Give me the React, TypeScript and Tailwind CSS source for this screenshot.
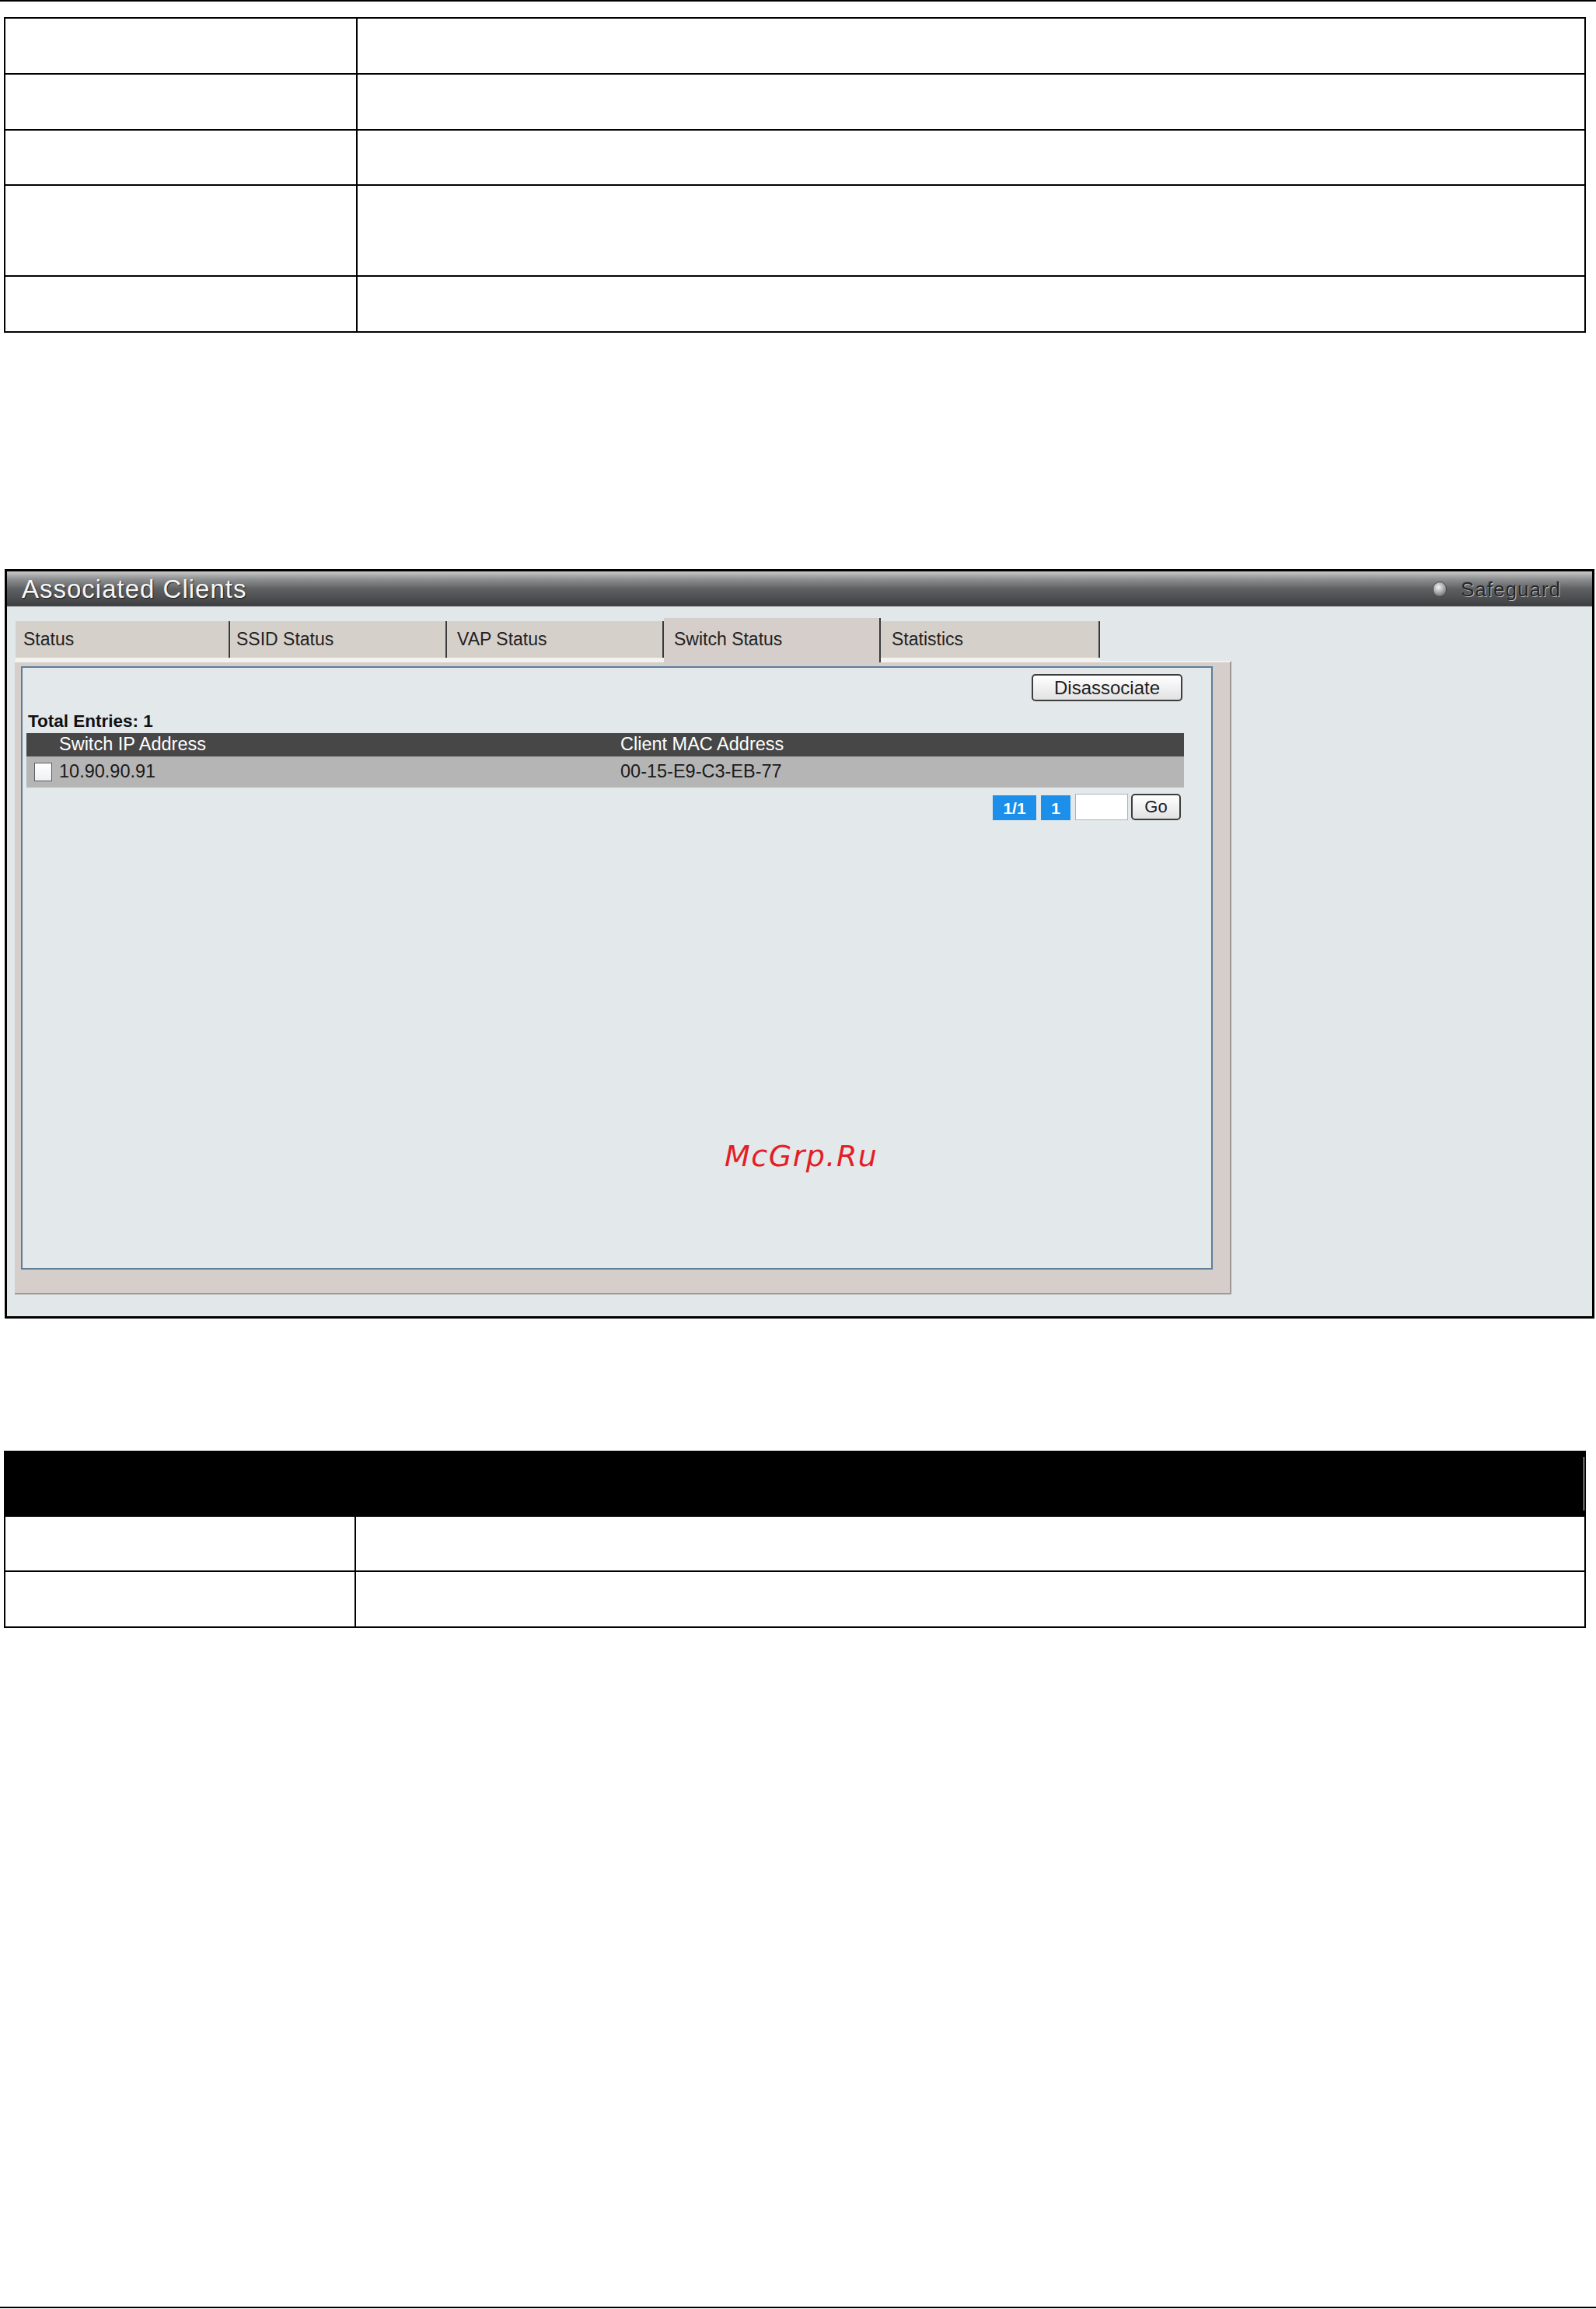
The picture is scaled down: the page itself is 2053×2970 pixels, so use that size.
import React from "react";

function InactiveTab({ w, label, pl }: { w: string; label: string; pl: string }) {
  return (
    <div className={`${w} mt-[4px] h-[51px] flex flex-col border-b-[4px] border-[#f4f2ee]`}>
      <div
        className={`flex-1 flex items-center ${pl} bg-[#d6d0cb] border-r-2 border-[#3a3a3a] text-[23px] text-[#222] font-['Liberation_Sans',Arial,sans-serif]`}
      >
        {label}
      </div>
    </div>
  );
}

export default function App() {
  const topRows = ["h-[72px]", "h-[72px]", "h-[71px]", "h-[117px]", "h-[72px]"];
  const bottomRows = ["h-[71px]", "h-[72px]"];

  return (
    <div className="w-[2053px] h-[2970px] bg-white flex flex-col font-['Liberation_Sans',Arial,sans-serif]">
      {/* top rule */}
      <div className="h-[2px] w-full bg-black shrink-0" />

      {/* top document table */}
      <div className="ml-[5px] mt-[20px] w-[2035px] border-x-2 border-t-2 border-black shrink-0">
        {topRows.map((h, i) => (
          <div key={i} className={`${h} flex border-b-2 border-black`}>
            <div className="w-[453px] border-r-2 border-black" />
            <div className="flex-1" />
          </div>
        ))}
      </div>

      {/* screenshot panel */}
      <div className="ml-[6px] mt-[304px] w-[2045px] h-[964px] border-[3px] border-black flex flex-col shrink-0">
        {/* title bar */}
        <div className="h-[45px] shrink-0 flex items-center justify-between pl-[19px] pr-[40px] bg-[linear-gradient(to_bottom,#c6c8c9_0%,#8e9091_22%,#5f6061_50%,#3d3e3f_100%)]">
          <span className="text-[33px] leading-none tracking-[1px] text-[#f7f7f7] [text-shadow:1px_1px_1px_#1e1e1e] font-['Liberation_Sans',Arial,sans-serif]">
            Associated Clients
          </span>
          <div className="flex items-center gap-[18px]">
            <span className="w-[18px] h-[20px] rounded-full bg-[radial-gradient(circle_at_40%_35%,#f4f4f4,#a4a4a4_50%,#4a4a4a)] border border-[#4a4a4a]" />
            <span className="text-[26px] leading-none tracking-[1px] text-[#262626] [text-shadow:1px_1px_0_#bdbdbd,-1px_-1px_0_#6e6e6e] font-['Liberation_Sans',Arial,sans-serif]">
              Safeguard
            </span>
          </div>
        </div>

        {/* body */}
        <div className="flex-1 bg-[#e2e7ea] flex flex-col">
          {/* tabs */}
          <div className="h-[70px] shrink-0 flex items-start pl-[11px] pt-[15px]">
            <InactiveTab w="w-[276px]" label="Status" pl="pl-[10px]" />
            <InactiveTab w="w-[279px]" label="SSID Status" pl="pl-[8px]" />
            <InactiveTab w="w-[279px]" label="VAP Status" pl="pl-[13px]" />
            <div className="w-[279px] h-[57px] relative z-10 bg-[#d6cecb] border-r-2 border-[#3a3a3a] pt-[4px]">
              <div className="h-[46px] flex items-center pl-[13px] text-[23px] text-[#222] font-['Liberation_Sans',Arial,sans-serif]">
                Switch Status
              </div>
            </div>
            <InactiveTab w="w-[282px]" label="Statistics" pl="pl-[14px]" />
          </div>

          {/* tan frame */}
          <div className="ml-[10px] w-[1565px] h-[815px] shrink-0 bg-[#d6cecb] border-t-2 border-t-[#f4f2ee] border-r-2 border-r-[#9d9795] border-b-2 border-b-[#9d9795] pt-[5px] pl-[8px]">
            {/* content box */}
            <div className="relative w-[1533px] h-[776px] border-2 border-[#5f7d99] bg-[#e3e8eb] flex flex-col">
              <div className="flex justify-end pr-[37px] pt-[8px]">
                <button className="w-[194px] h-[35px] rounded-[5px] border-2 border-[#3d3d3d] bg-[linear-gradient(to_bottom,#ffffff,#e2e2e2)] text-[24px] leading-none text-[#1e1e1e] font-['Liberation_Sans',Arial,sans-serif]">
                  Disassociate
                </button>
              </div>

              <div className="mt-[14px] pl-[7px] text-[22.5px] leading-[24px] font-bold text-[#111]">
                Total Entries: 1
              </div>

              <div className="mt-[3px] ml-[5px] w-[1489px] h-[30px] bg-[#474747] flex items-center text-[23.5px] leading-none text-white">
                <div className="w-[764px] pl-[42px]">Switch IP Address</div>
                <div>Client MAC Address</div>
              </div>
              <div className="ml-[5px] w-[1489px] h-[40px] bg-[#b5b5b5] flex items-center text-[23.5px] leading-none text-[#1a1a1a]">
                <div className="w-[764px] pl-[10px] flex items-center gap-[9px]">
                  <span className="w-[23px] h-[24px] bg-[linear-gradient(to_bottom,#ffffff,#eef0f2)] border border-[#5c5c5c]" />
                  <span>10.90.90.91</span>
                </div>
                <div>00-15-E9-C3-EB-77</div>
              </div>

              {/* pagination */}
              <div className="mt-[8px] flex justify-end items-start pr-[39px]">
                <div className="mt-[2px] w-[56px] h-[32px] bg-[#1b8fe9] flex items-center justify-center text-white font-bold text-[21px] leading-none">
                  1/1
                </div>
                <div className="ml-[6px] mt-[2px] w-[38px] h-[32px] bg-[#1b8fe9] flex items-center justify-center text-white font-bold text-[21px] leading-none">
                  1
                </div>
                <div className="ml-[6px] w-[68px] h-[34px] bg-white border border-[#a9b4bd]" />
                <button className="ml-[4px] w-[64px] h-[34px] rounded-[5px] border-2 border-[#3d3d3d] bg-[linear-gradient(to_bottom,#ffffff,#e2e2e2)] text-[22px] leading-none text-[#1e1e1e]">
                  Go
                </button>
              </div>

              {/* watermark */}
              <span className="absolute left-[903px] top-[609px] text-[38px] leading-none italic tracking-[1.5px] text-[#e31e26] font-['DejaVu_Sans',sans-serif]">
                McGrp.Ru
              </span>
            </div>
          </div>
        </div>
      </div>

      {/* bottom document table */}
      <div className="ml-[5px] mt-[170px] w-[2035px] shrink-0">
        <div className="h-[85px] bg-black flex">
          <div className="flex-1" />
          <div className="w-[1px] my-[8px] bg-[#e8e8e8]" />
          <div className="w-[2px]" />
        </div>
        <div className="border-x-2 border-black">
          {bottomRows.map((h, i) => (
            <div key={i} className={`${h} flex border-b-2 border-black`}>
              <div className="w-[451px] border-r-2 border-black" />
              <div className="flex-1" />
            </div>
          ))}
        </div>
      </div>

      {/* bottom rule */}
      <div className="mt-auto mb-[1px] h-[2px] w-full bg-black shrink-0" />
    </div>
  );
}
